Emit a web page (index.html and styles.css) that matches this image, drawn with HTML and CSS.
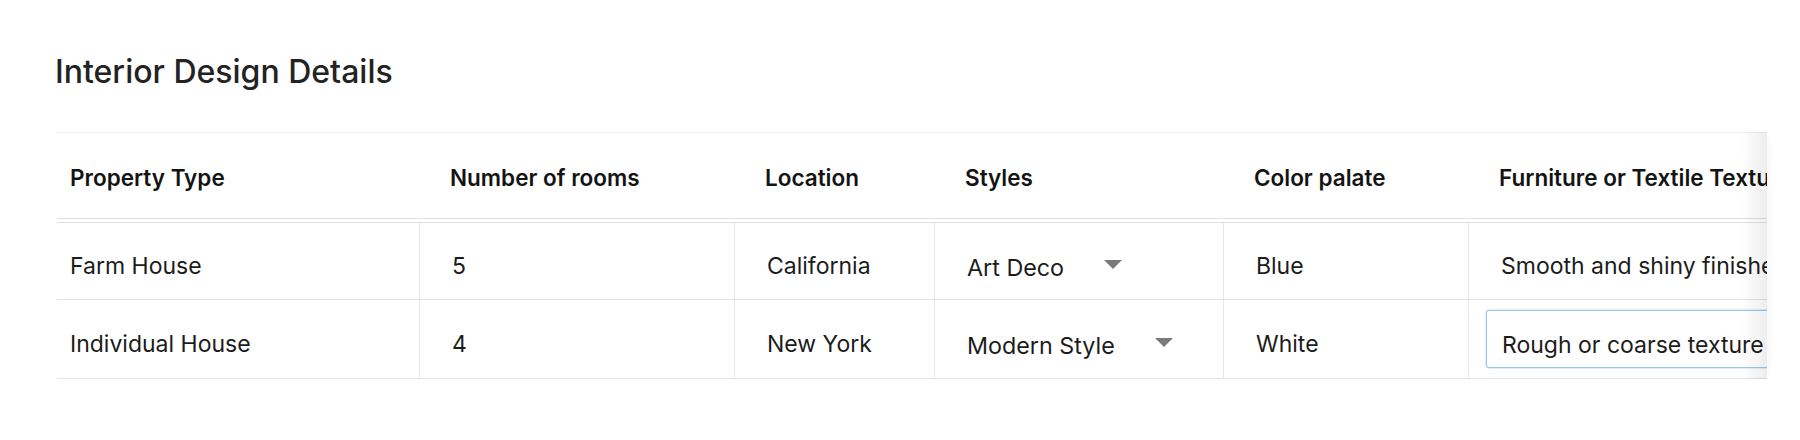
FILE: index.html
```html
<!DOCTYPE html>
<html lang="en">
<head>
<meta charset="utf-8">
<title>Interior Design Details</title>
<link rel="stylesheet" href="styles.css">
</head>
<body>
<div class="page">
  <h1 class="title">Interior Design Details</h1>
  <div class="table-area">
    <div class="scroller">
      <table class="grid">
        <thead>
          <tr>
            <th class="c1">Property Type</th>
            <th class="c2">Number of rooms</th>
            <th class="c3">Location</th>
            <th class="c4">Styles</th>
            <th class="c5">Color palate</th>
            <th class="c6">Furniture or Textile Texture</th>
          </tr>
        </thead>
        <tbody>
          <tr class="r1">
            <td class="c1"><div class="cell">Farm House</div></td>
            <td><div class="cell">5</div></td>
            <td><div class="cell">California</div></td>
            <td><div class="cell"><span class="select"><span class="select-text">Art Deco</span><svg class="caret" width="18" height="9" viewBox="0 0 18 9"><path d="M0 0H18L9 9Z" fill="#7a7a7a"/></svg></span></div></td>
            <td><div class="cell">Blue</div></td>
            <td class="last"><div class="cell">Smooth and shiny finished surfaces</div></td>
          </tr>
          <tr class="r2">
            <td class="c1"><div class="cell">Individual House</div></td>
            <td><div class="cell">4</div></td>
            <td><div class="cell">New York</div></td>
            <td><div class="cell"><span class="select"><span class="select-text">Modern Style</span><svg class="caret" width="18" height="9" viewBox="0 0 18 9"><path d="M0 0H18L9 9Z" fill="#7a7a7a"/></svg></span></div></td>
            <td><div class="cell">White</div></td>
            <td class="last input-td"><div class="cell cell-input"><input class="text-input" type="text" value="Rough or coarse texture"></div></td>
          </tr>
        </tbody>
      </table>
    </div>
    <div class="fade"></div>
  </div>
</div>
</body>
</html>
```
FILE: styles.css
```css
* { box-sizing: border-box; }

body {
  margin: 0;
  background: #ffffff;
  font-family: "Inter", "Open Sans", sans-serif;
  color: #1c1c1c;
}

.page {
  padding: 52px 0 0 57px;
}

.title {
  margin: 0 0 40px -2px;
  font-size: 32px;
  line-height: 40px;
  font-weight: 500;
  color: #232323;
}

.table-area {
  position: relative;
  width: 1710px;
}

.scroller {
  overflow: hidden;
  border-top: 1px solid #f0f0f0;
}

.grid {
  border-collapse: separate;
  border-spacing: 0;
  table-layout: fixed;
  width: 1912px;
}

.grid th {
  padding: 31px 0 27px 30px;
  line-height: 28px;
  font-size: 22.5px;
  font-weight: 600;
  color: #141414;
  text-align: left;
  white-space: nowrap;
  border-bottom: 3px solid #ffffff;
  box-shadow: inset 0 -1px 0 #e0e0e0;
}

.grid th.c1 { width: 363px; padding-left: 13px; }
.grid th.c2 { width: 315px; }
.grid th.c3 { width: 200px; }
.grid th.c4 { width: 289px; }
.grid th.c5 { width: 245px; }
.grid th.c6 { width: 500px; }

.grid td {
  padding: 0 0 0 32px;
  font-size: 23px;
  line-height: 28px;
  color: #1c1c1c;
  border-right: 1px solid #e8e8e8;
  border-bottom: 1px solid #e4e4e4;
  white-space: nowrap;
  overflow: hidden;
}

.grid td.c1 { padding-left: 13px; }
.grid td.last { border-right: none; }
.grid td.input-td { padding-left: 17px; }

.r1 td { border-top: 1px solid #e0e0e0; }

.cell {
  display: flex;
  align-items: center;
  height: 76px;
  padding-top: 9px;
}

.r2 .cell { height: 78px; }

.r2 .cell.cell-input { padding-top: 0; }

.select {
  display: inline-flex;
  align-items: center;
  gap: 40px;
  padding-top: 4px;
  font-size: 23.3px;
}

.caret {
  display: block;
  margin-bottom: 6px;
}

.text-input {
  display: block;
  width: 420px;
  height: 58px;
  margin: 0;
  padding: 20px 15px 8px;
  border: 1px solid #9cc8e9;
  border-radius: 3px;
  box-shadow: 0 0 0 0.5px rgba(156, 200, 233, 0.6);
  background: #ffffff;
  font-family: "Inter", "Open Sans", sans-serif;
  font-size: 23px;
  line-height: 28px;
  color: #1c1c1c;
  outline: none;
}

.fade {
  position: absolute;
  top: 0;
  right: 0;
  width: 26px;
  height: 247px;
  background: linear-gradient(to right, rgba(0, 0, 0, 0), rgba(0, 0, 0, 0.07));
  box-shadow: 6px 0 10px -6px rgba(0, 0, 0, 0.06);
  pointer-events: none;
}
```
